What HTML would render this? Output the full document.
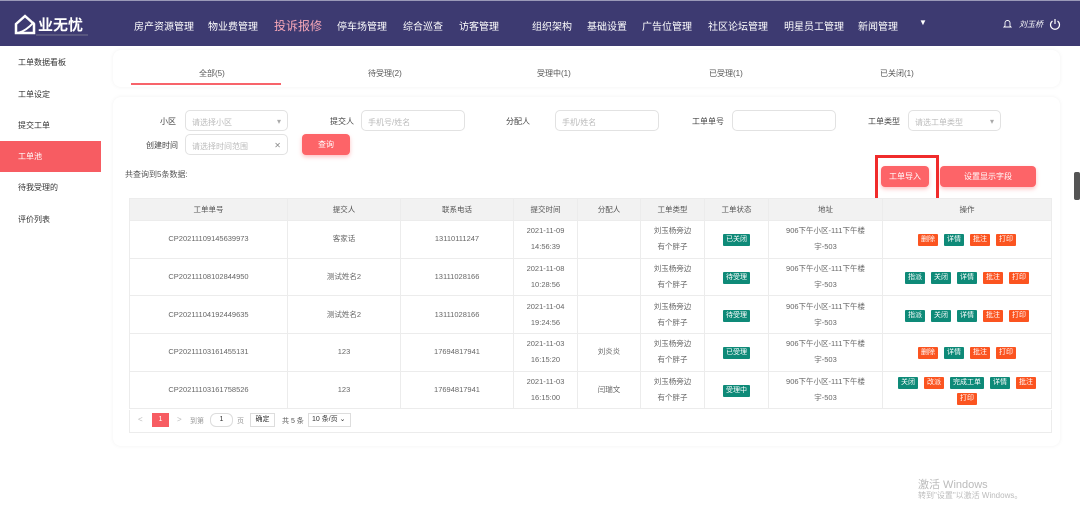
<!DOCTYPE html>
<html><head><meta charset="utf-8"><style>
*{margin:0;padding:0;box-sizing:border-box}
body{width:1080px;height:516px;overflow:hidden;background:#fff;font-family:"Liberation Sans","Noto Sans CJK SC",sans-serif;color:#333;position:relative;font-size:8px}
.hdr{position:absolute;left:0;top:0;width:1080px;height:46px;background:#3d3a71;border-top:1px solid #9a99b8}
.nav{position:absolute;top:17px;font-size:10px;color:#fff;white-space:nowrap}
.logo{position:absolute;left:14px;top:12px}
.side{position:absolute;left:0;top:46px;width:101px;height:470px;background:#fff}
.si{position:absolute;left:0;width:101px;height:31px;line-height:31px;padding-left:18px;font-size:8px;color:#333}
.si.act{background:#f75c62;color:#fff}
.card{position:absolute;background:#fff;border-radius:8px;box-shadow:0 0 4px rgba(0,0,0,0.06)}
.tab{position:absolute;top:18px;font-size:8px;color:#555}
.lbl{position:absolute;font-size:8px;color:#444;text-align:right}
.inp{position:absolute;height:21px;border:1px solid #e2e2e2;border-radius:5px;font-size:8px;color:#bbb;padding:6px 6px;background:#fff}
.btn{position:absolute;background:#fd6468;color:#fff;font-size:8px;text-align:center;border-radius:4px;box-shadow:0 2px 4px rgba(253,100,104,.4)}
table{position:absolute;left:129px;top:198px;border-collapse:collapse;font-size:7.5px;color:#666}
td,th{border:1px solid #ececec;text-align:center;font-weight:normal;line-height:16px}
th{background:#f2f2f2;height:22px;color:#555}
td{height:37.7px}
.t{display:inline-block;color:#fff;padding:0 3px;line-height:12px;font-size:7px;margin:0 3px;border-radius:1px}
.g{background:#0e8a78}.o{background:#fb5420}
</style></head><body>
<div class="hdr">
 <div class="logo"><svg width="78" height="24" viewBox="0 0 78 24"><path d="M2 20 L2 11 L11 3 L20 11 L20 20 Z" fill="none" stroke="#fff" stroke-width="2.5"/><path d="M4 20 Q12 18 20 9" stroke="#fff" stroke-width="2" fill="none"/><text x="24" y="17" fill="#fff" font-size="15" font-weight="bold" font-family="Noto Sans CJK SC">业无忧</text><line x1="22" y1="22" x2="74" y2="22" stroke="#aaa" stroke-width="0.5"/></svg></div>
 <div class="nav" style="left:134px">房产资源管理</div>
 <div class="nav" style="left:208px">物业费管理</div>
 <div class="nav" style="left:274px;font-size:12px;top:16px;color:#f7a7b8">投诉报修</div>
 <div class="nav" style="left:337px">停车场管理</div>
 <div class="nav" style="left:403px">综合巡查</div>
 <div class="nav" style="left:459px">访客管理</div>
 <div class="nav" style="left:532px">组织架构</div>
 <div class="nav" style="left:587px">基础设置</div>
 <div class="nav" style="left:642px">广告位管理</div>
 <div class="nav" style="left:708px">社区论坛管理</div>
 <div class="nav" style="left:784px">明星员工管理</div>
 <div class="nav" style="left:858px">新闻管理</div>
 <div class="nav" style="left:919px;font-size:8px;top:17px">▼</div>
 <svg style="position:absolute;left:1003px;top:18px" width="9" height="10" viewBox="0 0 9 10"><path d="M2 7 L2 4 A2.5 2.5 0 0 1 7 4 L7 7 L8 8 L1 8 Z" fill="none" stroke="#fff" stroke-width="0.9"/></svg>
 <div class="nav" style="left:1019px;font-size:8px;top:18px;font-style:italic">刘玉桥</div>
 <svg style="position:absolute;left:1049px;top:17px" width="12" height="12" viewBox="0 0 12 12"><path d="M3.5 3 A4.5 4.5 0 1 0 8.5 3" fill="none" stroke="#fff" stroke-width="1.2"/><line x1="6" y1="1" x2="6" y2="6" stroke="#fff" stroke-width="1.2"/></svg>
</div>
<div class="side">
 <div class="si" style="top:1px">工单数据看板</div>
 <div class="si" style="top:33px">工单设定</div>
 <div class="si" style="top:64px">提交工单</div>
 <div class="si act" style="top:95px">工单池</div>
 <div class="si" style="top:126px">待我受理的</div>
 <div class="si" style="top:158px">评价列表</div>
</div>
<div class="card" style="left:113px;top:50px;width:947px;height:37px">
 <div class="tab" style="left:86px">全部(5)</div>
 <div class="tab" style="left:255px">待受理(2)</div>
 <div class="tab" style="left:424px">受理中(1)</div>
 <div class="tab" style="left:596px">已受理(1)</div>
 <div class="tab" style="left:767px">已关闭(1)</div>
 <div style="position:absolute;left:18px;top:33px;width:150px;height:2px;background:#f7636a"></div>
</div>
<div class="card" style="left:113px;top:97px;width:947px;height:349px"></div>
<div class="lbl" style="left:160px;top:116px">小区</div>
<div class="inp" style="left:185px;top:110px;width:103px">请选择小区<span style="float:right;color:#aaa">▾</span></div>
<div class="lbl" style="left:330px;top:116px">提交人</div>
<div class="inp" style="left:361px;top:110px;width:104px">手机号/姓名</div>
<div class="lbl" style="left:506px;top:116px">分配人</div>
<div class="inp" style="left:555px;top:110px;width:104px">手机/姓名</div>
<div class="lbl" style="left:692px;top:116px">工单单号</div>
<div class="inp" style="left:732px;top:110px;width:104px"></div>
<div class="lbl" style="left:868px;top:116px">工单类型</div>
<div class="inp" style="left:908px;top:110px;width:93px">请选工单类型<span style="float:right;color:#aaa">▾</span></div>
<div class="lbl" style="left:146px;top:140px">创建时间</div>
<div class="inp" style="left:185px;top:134px;width:103px">请选择时间范围<span style="float:right;color:#888">✕</span></div>
<div class="btn" style="left:302px;top:134px;width:48px;height:21px;line-height:21px">查询</div>
<div style="position:absolute;left:125px;top:169px;font-size:8px;color:#555">共查询到5条数据:</div>
<div class="btn" style="left:881px;top:166px;width:48px;height:21px;line-height:21px">工单导入</div>
<div class="btn" style="left:940px;top:166px;width:96px;height:21px;line-height:21px">设置显示字段</div>
<div style="position:absolute;left:875px;top:155px;width:64px;height:48px;border:3px solid #f02b2b"></div>
<table style="width:923px">
<tr><th style="width:158px">工单单号</th><th style="width:113px">提交人</th><th style="width:113px">联系电话</th><th style="width:64px">提交时间</th><th style="width:63px">分配人</th><th style="width:64px">工单类型</th><th style="width:64px">工单状态</th><th style="width:114px">地址</th><th>操作</th></tr>
<tr><td>CP20211109145639973</td><td>客家话</td><td>13110111247</td><td>2021-11-09<br>14:56:39</td><td></td><td>刘玉杨旁边<br>有个胖子</td><td><span class="t g">已关闭</span></td><td>906下午小区-111下午楼<br>宇-503</td><td><span class="t o">删除</span><span class="t g">详情</span><span class="t o">批注</span><span class="t o">打印</span></td></tr>
<tr><td>CP20211108102844950</td><td>测试姓名2</td><td>13111028166</td><td>2021-11-08<br>10:28:56</td><td></td><td>刘玉杨旁边<br>有个胖子</td><td><span class="t g">待受理</span></td><td>906下午小区-111下午楼<br>宇-503</td><td><span class="t g">指派</span><span class="t g">关闭</span><span class="t g">详情</span><span class="t o">批注</span><span class="t o">打印</span></td></tr>
<tr><td>CP20211104192449635</td><td>测试姓名2</td><td>13111028166</td><td>2021-11-04<br>19:24:56</td><td></td><td>刘玉杨旁边<br>有个胖子</td><td><span class="t g">待受理</span></td><td>906下午小区-111下午楼<br>宇-503</td><td><span class="t g">指派</span><span class="t g">关闭</span><span class="t g">详情</span><span class="t o">批注</span><span class="t o">打印</span></td></tr>
<tr><td>CP20211103161455131</td><td>123</td><td>17694817941</td><td>2021-11-03<br>16:15:20</td><td>刘炎炎</td><td>刘玉杨旁边<br>有个胖子</td><td><span class="t g">已受理</span></td><td>906下午小区-111下午楼<br>宇-503</td><td><span class="t o">删除</span><span class="t g">详情</span><span class="t o">批注</span><span class="t o">打印</span></td></tr>
<tr><td>CP20211103161758526</td><td>123</td><td>17694817941</td><td>2021-11-03<br>16:15:00</td><td>闫瑞文</td><td>刘玉杨旁边<br>有个胖子</td><td><span class="t g">受理中</span></td><td>906下午小区-111下午楼<br>宇-503</td><td><span class="t g">关闭</span><span class="t o">改派</span><span class="t g">完成工单</span><span class="t g">详情</span><span class="t o">批注</span><br><span class="t o">打印</span></td></tr>
</table>
<div style="position:absolute;left:129px;top:410px;width:923px;height:23px;border:1px solid #ececec;border-top:none"></div>
<div style="position:absolute;left:138px;top:415px;font-size:8px;color:#bbb">&lt;</div>
<div style="position:absolute;left:152px;top:413px;width:17px;height:14px;background:#f75c62;color:#fff;font-size:7px;text-align:center;line-height:14px">1</div>
<div style="position:absolute;left:177px;top:415px;font-size:8px;color:#bbb">&gt;</div>
<div style="position:absolute;left:190px;top:416px;font-size:7px;color:#999">到第</div>
<div style="position:absolute;left:210px;top:413px;width:23px;height:14px;border:1px solid #ddd;border-radius:6px;font-size:7px;text-align:center;line-height:12px">1</div>
<div style="position:absolute;left:237px;top:416px;font-size:7px;color:#999">页</div>
<div style="position:absolute;left:250px;top:413px;width:25px;height:14px;border:1px solid #ddd;font-size:7px;text-align:center;line-height:12px">确定</div>
<div style="position:absolute;left:282px;top:416px;font-size:7px;color:#555">共 5 条</div>
<div style="position:absolute;left:308px;top:413px;width:43px;height:14px;border:1px solid #ddd;font-size:7px;line-height:12px;padding-left:3px">10 条/页 ⌄</div>
<div style="position:absolute;left:1074px;top:172px;width:6px;height:28px;background:#555;border-radius:2px"></div>
<div style="position:absolute;left:918px;top:476px;font-size:11px;color:#bbb">激活 Windows</div>
<div style="position:absolute;left:918px;top:490px;font-size:8px;color:#bbb">转到"设置"以激活 Windows。</div>
</body></html>
